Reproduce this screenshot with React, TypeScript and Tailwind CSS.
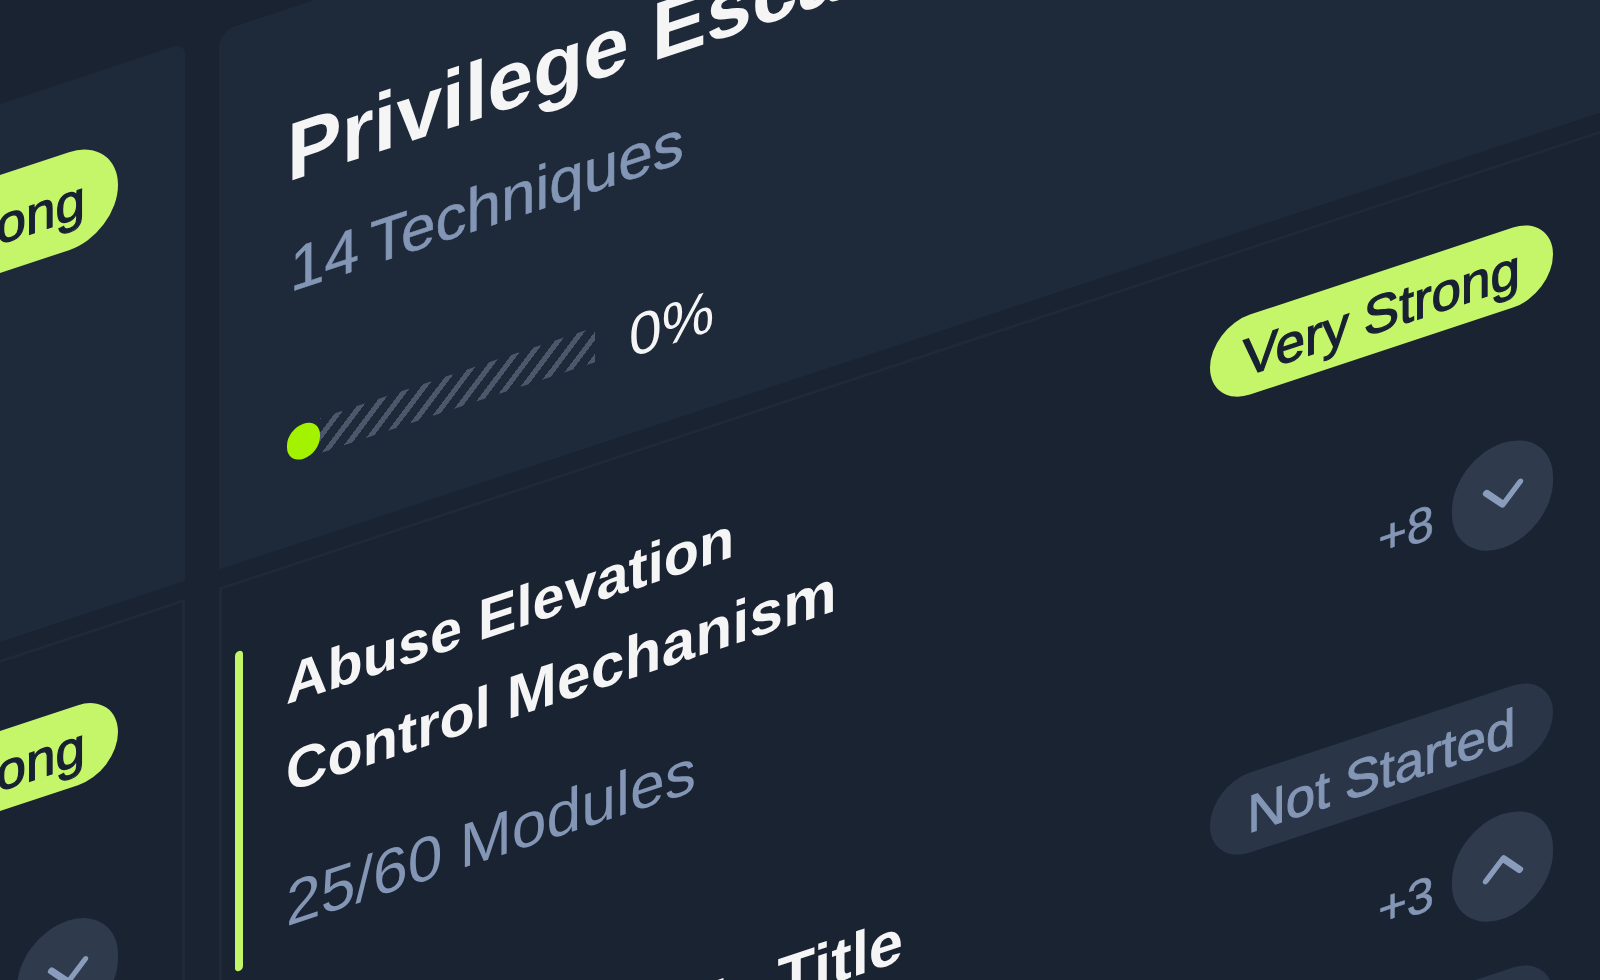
import { ChevronDown, ChevronUp } from "lucide-react";

const Pill = ({ label, strong, tall }: { label: string; strong?: boolean; tall?: boolean }) => (
  <span
    className={`flex w-[343px] shrink-0 items-center justify-center rounded-full pt-[4px] text-[53px] ${
      tall ? "h-[98px]" : "h-[80px]"
    } ${
      strong
        ? "bg-[#c5f66a] text-[#182132] [-webkit-text-stroke:1.3px_currentColor]"
        : "bg-[#2a3548] text-[#8496b5] [-webkit-text-stroke:1px_currentColor]"
    }`}
  >
    {label}
  </span>
);

const Toggle = ({ count, up }: { count?: string; up?: boolean }) => (
  <div className="flex items-center gap-[18px]">
    {count && (
      <span className="pt-[5px] text-[49px] leading-none text-[#8496b5] [-webkit-text-stroke:0.6px_currentColor]">
        {count}
      </span>
    )}
    <div className="flex h-[105px] w-[101px] items-center justify-center rounded-full bg-[#2f3a4d] text-[#8a9cbc]">
      {up ? <ChevronUp size={68} strokeWidth={2.2} /> : <ChevronDown size={68} strokeWidth={2.2} />}
    </div>
  </div>
);

const Row = ({
  title,
  sub,
  status,
  strong,
  count,
  up,
  active,
  className,
}: {
  title: React.ReactNode;
  sub: string;
  status: string;
  strong?: boolean;
  count: string;
  up?: boolean;
  active?: boolean;
  className: string;
}) => (
  <div className={`flex ${className}`}>
    <div className={`mt-[2px] w-[8px] shrink-0 rounded-full ${active ? "bg-[#c3f569]" : ""}`} />
    <div className="ml-[43px] flex-1 pt-[8px]">
      {title}
      <div className="mt-[57px] text-[62.5px] leading-[62px] text-[#8496b5]">{sub}</div>
    </div>
    <div className="flex w-[343px] shrink-0 flex-col items-end justify-between pb-[5px]">
      <Pill label={status} strong={strong} />
      <Toggle count={count} up={up} />
    </div>
  </div>
);

const titleLine = "text-[57.6px] font-bold leading-[87px] text-[#f5f5f5]";

export default function App() {
  return (
    <div className="h-[980px] w-[1600px] overflow-hidden bg-[#1a2332] font-['Liberation_Sans',sans-serif]">
      <div className="flex h-[1700px] w-[1640px] origin-top-left skew-y-[-18.3deg] gap-[34px] pt-[104px]">
        {/* left column, mostly cut by the window */}
        <div className="w-[185px] shrink-0">
          <div className="flex h-[538px] items-start justify-end rounded-tr-[12px] bg-[#1e2a3a] pr-[67px] pt-[71px]">
            <Pill label="Very Strong" strong tall />
          </div>
          <div className="mt-[18px] flex h-[700px] flex-col items-end border-r-[3px] border-t-[3px] border-[#1e2a3a] pr-[64px] pt-[68px]">
            <Pill label="Very Strong" strong />
            <div className="mt-[132px]">
              <Toggle />
            </div>
          </div>
        </div>

        {/* main column */}
        <div className="w-[1401px] shrink-0">
          <div className="h-[538px] rounded-t-[16px] bg-[#1e2a3a] pl-[68px] pt-[105px]">
            <div className="whitespace-nowrap text-[82px] font-bold leading-[80px] text-[#f5f5f5]">
              Privilege Escalation
            </div>
            <div className="mt-[48px] pl-[3px] text-[62px] leading-[60px] text-[#8496b5] [word-spacing:-5px] [-webkit-text-stroke:0.6px_currentColor]">
              14 Techniques
            </div>
            <div className="mt-[116px] flex h-[56px] items-center">
              <div className="h-[35px] w-[33px] shrink-0 rounded-full bg-[#a3f200]" />
              <div className="h-[35px] w-[275px] bg-[repeating-linear-gradient(-45deg,#4b576a_0,#4b576a_6px,transparent_6px,transparent_15.6px)]" />
              <span className="ml-[34px] pt-[10px] text-[59px] leading-[56px] text-[#f5f5f5]">0%</span>
            </div>
          </div>
          <div className="mt-[18px] border-l-[3px] border-t-[3px] border-[#1e2a3a] pl-[13px] pr-[67px] pt-[65px]">
            <Row
              active
              className="h-[322px]"
              title={
                <>
                  <div className={titleLine}>Abuse Elevation</div>
                  <div className={titleLine}>
                    Control <span className="text-[60px] tracking-[0.4px]">Mechanism</span>
                  </div>
                </>
              }
              sub="25/60 Modules"
              status="Very Strong"
              strong
              count="+8"
            />
            <Row
              className="mt-[136px] h-[235px]"
              title={
                <div className={titleLine}>
                  Elevation Module <span className="ml-[2px] text-[61.5px]">Title</span>
                </div>
              }
              sub="12/40 Modules"
              status="Not Started"
              count="+3"
              up
            />
            <div className="mt-[47px] flex justify-end">
              <Pill label="Not Started" />
            </div>
          </div>
        </div>
      </div>
    </div>
  );
}
